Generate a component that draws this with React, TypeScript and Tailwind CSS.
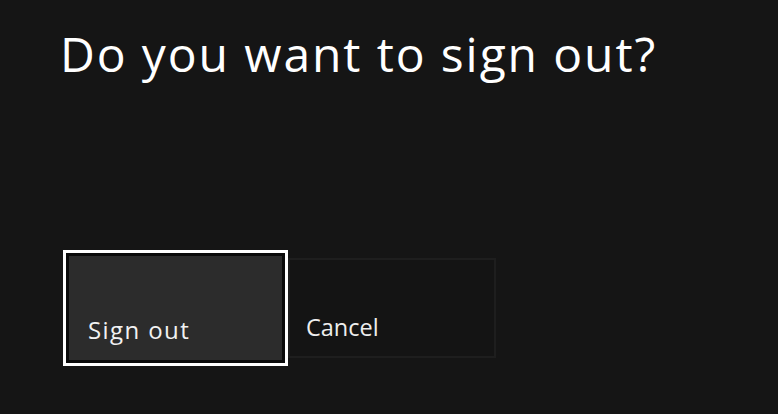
export default function App() {
  return (
    <div
      className="w-[778px] h-[414px] bg-[#151515] text-white overflow-hidden"
      style={{ fontFamily: '"Open Sans", "Noto Sans", sans-serif' }}
    >
      <div className="pt-[22px] pl-[60px]">
        <h1 className="text-[48px] leading-[64px] font-normal tracking-[1.9px]">Do you want to sign out?</h1>
      </div>

      <div className="flex items-center mt-[164px] ml-[63px]">
        <button className="w-[225px] h-[116px] border-[3px] border-white bg-[#0a0a0a] p-[3px]">
          <div className="w-full h-full bg-[#2c2c2c] flex items-end pl-[19px] pb-[15px]">
            <span className="text-[24px] leading-[30px] tracking-[1.4px] text-[#f2f2f2]">Sign out</span>
          </div>
        </button>
        <button className="w-[208px] h-[100px] border-2 border-[#1e1e1e] bg-[#141414] flex items-end pl-[16px] pb-[16px]">
          <span className="text-[23.5px] leading-[26px] text-[#eeeeee]">Cancel</span>
        </button>
      </div>
    </div>
  );
}
